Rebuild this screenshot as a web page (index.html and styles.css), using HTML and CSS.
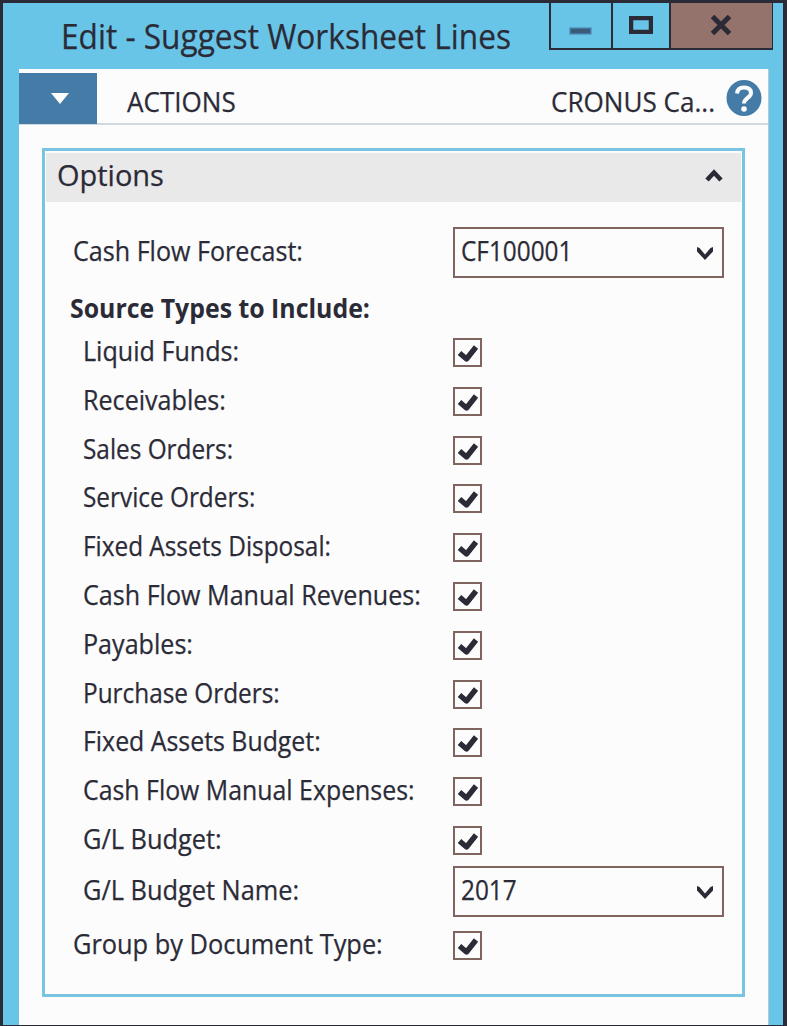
FILE: index.html
```html
<!DOCTYPE html>
<html lang="en">
<head>
<meta charset="utf-8">
<title>Edit - Suggest Worksheet Lines</title>
<link rel="stylesheet" href="styles.css">
</head>
<body>
<svg width="0" height="0" class="defs">
  <symbol id="check" viewBox="0 0 25 25"><path d="M4.500 13 11.500 19 21 7" fill="none" stroke="#2b2b37" stroke-width="5.400" stroke-linejoin="round"/></symbol>
  <symbol id="down" viewBox="0 0 18 16"><path d="M1 2v4.500l8 8.500 8-8.500V2l-2.500 1L9 9.500 3.500 3z" fill="#2b2b37"/></symbol>
</svg>
<div class="window">
  <header class="titlebar">
    <h1 class="title"><span class="fit">Edit - Suggest Worksheet Lines</span></h1>
    <div class="controls">
      <button class="ctl min" aria-label="Minimize"><svg width="24" height="8"><rect x=".5" y=".5" width="22" height="7" fill="#457ca7"/><path d="M2 4h19" stroke="#3a5a78" stroke-width="4"/></svg></button>
      <button class="ctl max" aria-label="Maximize"><svg width="24" height="18"><rect x="2" y="2" width="20" height="14" fill="none" stroke="#2b2b37" stroke-width="4.500"/></svg></button>
      <button class="ctl close" aria-label="Close"><svg width="22" height="20"><path d="M2.500 1.500 19.500 18.500M19.500 1.500 2.500 18.500" stroke="#2b2b37" stroke-width="5"/></svg></button>
    </div>
  </header>
  <main class="content">
    <nav class="ribbon">
      <button class="app" aria-label="Menu"><svg width="18" height="11"><path d="M0 0h18L9 11z" fill="#fcfcfc"/></svg></button>
      <div class="tab"><span class="fit wider">ACTIONS</span></div>
      <div class="company"><span class="fit wider">CRONUS Ca...</span></div>
      <svg class="help" width="36" height="38" viewBox="0 0 36 38"><ellipse cx="18" cy="19" rx="17.500" ry="18" fill="#457ca7"/><path d="M11 14.500Q11.500 8.500 18 8.500q7 0 7 5.500c0 5-7 5-7 10.500" fill="none" stroke="#fcfcfc" stroke-width="4"/><circle cx="18" cy="30" r="2.800" fill="#fcfcfc"/></svg>
    </nav>
    <section class="panel">
      <div class="panel-head"><h2 class="fit wider">Options</h2><svg width="18" height="14"><path d="M2 12 9 4.500 16 12" fill="none" stroke="#2b2b37" stroke-width="4.600"/></svg></div>
      <div class="rows">
        <div class="row field"><label class="fit">Cash Flow Forecast:</label><div class="select"><span class="fit narrow">CF100001</span><svg width="18" height="16"><use href="#down"/></svg></div></div>
        <h3 class="group"><span class="fit">Source Types to Include:</span></h3>
        <div class="row sub"><label class="fit">Liquid Funds:</label><span class="box"><svg width="25" height="25"><use href="#check"/></svg></span></div>
        <div class="row sub"><label class="fit">Receivables:</label><span class="box"><svg width="25" height="25"><use href="#check"/></svg></span></div>
        <div class="row sub"><label class="fit narrow">Sales Orders:</label><span class="box"><svg width="25" height="25"><use href="#check"/></svg></span></div>
        <div class="row sub"><label class="fit narrow">Service Orders:</label><span class="box"><svg width="25" height="25"><use href="#check"/></svg></span></div>
        <div class="row sub"><label class="fit narrow">Fixed Assets Disposal:</label><span class="box"><svg width="25" height="25"><use href="#check"/></svg></span></div>
        <div class="row sub"><label class="fit">Cash Flow Manual Revenues:</label><span class="box"><svg width="25" height="25"><use href="#check"/></svg></span></div>
        <div class="row sub"><label class="fit">Payables:</label><span class="box"><svg width="25" height="25"><use href="#check"/></svg></span></div>
        <div class="row sub"><label class="fit narrow">Purchase Orders:</label><span class="box"><svg width="25" height="25"><use href="#check"/></svg></span></div>
        <div class="row sub"><label class="fit snug">Fixed Assets Budget:</label><span class="box"><svg width="25" height="25"><use href="#check"/></svg></span></div>
        <div class="row sub"><label class="fit snug">Cash Flow Manual Expenses:</label><span class="box"><svg width="25" height="25"><use href="#check"/></svg></span></div>
        <div class="row sub"><label class="fit wide">G/L Budget:</label><span class="box"><svg width="25" height="25"><use href="#check"/></svg></span></div>
        <div class="row sub field name"><label class="fit wide">G/L Budget Name:</label><div class="select"><span class="fit narrow">2017</span><svg width="18" height="16"><use href="#down"/></svg></div></div>
        <div class="row"><label class="fit wide">Group by Document Type:</label><span class="box"><svg width="25" height="25"><use href="#check"/></svg></span></div>
      </div>
    </section>
  </main>
</div>
</body>
</html>
```
FILE: styles.css
```css
* { box-sizing: border-box; }
body { margin: 0; font: 27px/36px "Open Sans", "Noto Sans", sans-serif; color: #2b2b37; -webkit-text-stroke: .25px #2b2b37; }
h1, h2, h3 { margin: 0; font-weight: 400; }
svg { display: block; flex: none; }
button { border: 0; padding: 0; color: inherit; }
.defs { position: absolute; }
.fit { display: inline-block; white-space: nowrap; transform-origin: left center; transform: scaleX(.93); }
.fit.narrow { transform: scaleX(.902); }
.fit.snug { transform: scaleX(.921); }
.fit.wide { transform: scaleX(.939); }
.fit.wider { transform: scaleX(.966); }
.window { width: 787px; height: 1026px; border: solid #2b2b37; border-width: 3px 4px 1px 3px; background: #68c5e7; padding: 0 15px 0 16px; display: flex; flex-direction: column; overflow: hidden; }
.titlebar { height: 66px; flex: none; display: flex; justify-content: space-between; }
.title { width: 460px; padding: 10px 0 0 42px; font-size: 34px; line-height: 46px; }
.controls { display: flex; height: 47px; margin-right: -5px; border: solid #2b2b37; border-width: 0 1px 2px 2px; width: 224px; flex: none; }
.ctl { display: flex; justify-content: center; background: #68c5e7; border-right: 2px solid #2b2b37; }
.min { width: 62px; padding-top: 24px; align-items: flex-start; }
.max { width: 58px; padding-top: 13px; align-items: flex-start; }
.close { flex: 1; padding: 12px 2px 0 0; align-items: flex-start; background: #94736c; border-right: 0; }
.content { flex: 1; background: #fcfcfc; border-right: 1px solid #b4c6d8; margin-right: -1px; }
.ribbon { height: 56px; display: flex; align-items: center; border-bottom: 2px solid #cfd8df; }
.app { width: 78px; height: 51px; margin-top: 3px; background: #457ca7; display: flex; justify-content: center; align-items: center; margin-bottom: -1px; padding-left: 4px; }
.tab { width: 424px; padding: 15px 0 0 30px; height: 54px; }
.company { width: 176px; padding: 15px 0 0 30px; height: 54px; }
.help { margin-left: 29px; margin-top: 4px; }
.panel { margin: 23px 0 0 23px; width: 703px; height: 849px; border: 3px solid #78c4e2; padding: 2px 1px; }
.panel-head { height: 49px; background: #e9e9e9; display: flex; justify-content: space-between; align-items: center; padding: 0 18px 5px 11px; }
.panel-head h2 { font-size: 30px; }
.rows { padding: 25px 0 0 27px; }
.row { display: grid; grid-template-columns: 380px 271px; height: 48.8px; align-items: start; }
.row label { margin-top: -5px; justify-self: start; }
.sub { padding-left: 10px; grid-template-columns: 370px 271px; }
.field { height: 63px; }
.field label { margin-top: 6px; }
.group { height: 48px; font-size: 27px; font-weight: 700; margin-left: -3px; -webkit-text-stroke: 0; }
.group .fit { transform: scaleX(.921); }
.box { width: 29px; height: 29px; border: 2px solid #80645f; display: block; }
.select { width: 271px; height: 51px; border: 2px solid #80645f; display: flex; justify-content: space-between; padding: 4px 8px 0 6px; }
.select svg { margin-top: 12px; }
.name { height: 65.500px; margin-top: -8.800px; }
```
